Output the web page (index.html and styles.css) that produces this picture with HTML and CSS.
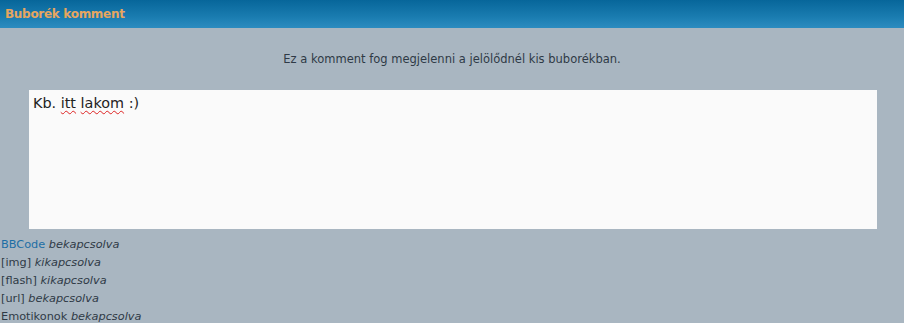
FILE: index.html
```html
<!DOCTYPE html>
<html>
<head>
<meta charset="utf-8">
<link rel="stylesheet" href="styles.css">
</head>
<body>
<div class="header"><span class="title">Buborék komment</span></div>
<div class="content">
  <p class="info">Ez a komment fog megjelenni a jelölődnél kis buborékban.</p>
  <div class="box"><div class="textarea">Kb. <span class="sp">itt</span> <span class="sp">lakom</span> :)</div></div>
  <div class="opts">
    <div><a class="link" href="#">BBCode</a> <em>bekapcsolva</em></div>
    <div>[img] <em>kikapcsolva</em></div>
    <div>[flash] <em>kikapcsolva</em></div>
    <div>[url] <em>bekapcsolva</em></div>
    <div>Emotikonok <em>bekapcsolva</em></div>
  </div>
</div>
</body>
</html>
```
FILE: styles.css
```css
html, body {
  margin: 0;
  padding: 0;
  background: #a9b6c1;
  font-family: "DejaVu Sans", Verdana, sans-serif;
  color: #333b44;
}
.header {
  height: 28px;
  background: linear-gradient(to bottom, #07669a 0%, #1a7cb0 60%, #2c8cc0 100%);
  display: flex;
  align-items: center;
  padding-left: 5px;
  box-sizing: border-box;
}
.title {
  font-family: "DejaVu Sans", Verdana, sans-serif;
  font-weight: bold;
  font-size: 12px;
  color: #e7a660;
  letter-spacing: -0.3px;
}
.content {
  display: flex;
  flex-direction: column;
}
.info {
  margin: 24px 0 0 0;
  text-align: center;
  font-size: 11.5px;
  line-height: 14px;
  color: #2f3a46;
}
.box {
  display: flex;
  justify-content: center;
  margin-top: 24px;
  padding-left: 2px;
}
.textarea {
  width: 848px;
  height: 139px;
  box-sizing: border-box;
  background: #fafafa;
  padding: 4px 4px;
  font-size: 14.4px;
  line-height: 18px;
  color: #222;
}
.sp {
  text-decoration: underline wavy #d22;
  text-decoration-thickness: 1px;
  text-underline-offset: 2px;
}
.opts {
  margin-top: 7px;
  padding-left: 1px;
  font-size: 11.3px;
  line-height: 18px;
  color: #2f3a46;
}
.opts em {
  font-style: italic;
}
.link {
  color: #1d6ea5;
  text-decoration: none;
}
```
